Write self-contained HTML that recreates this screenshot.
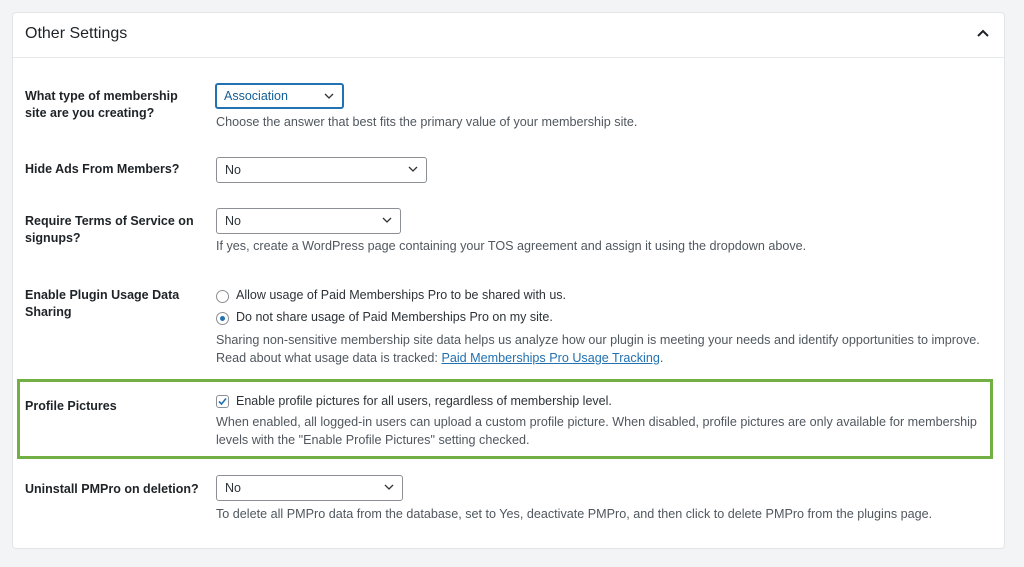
<!DOCTYPE html>
<html><head><style>
body{margin:0;width:1024px;height:567px;background:#f3f4f6;font-family:"Liberation Sans",sans-serif;position:relative;overflow:hidden}
.card{position:absolute;left:12px;top:12px;width:993px;height:537px;background:#fff;border:1px solid #e2e4e7;border-radius:4px;box-sizing:border-box}
.hd{position:absolute;left:0;right:0;top:0;height:44px;border-bottom:1px solid #e6e8ea}
.a{position:absolute;white-space:nowrap}
.t{font-size:16px;color:#1d2327}
.l{font-size:12.5px;font-weight:bold;color:#1d2327;line-height:17px}
.d{font-size:12.6px;color:#50575e;line-height:18px}
.o{font-size:12.5px;color:#2c3338}
.sel{position:absolute;height:26px;border:1px solid #8c8f94;border-radius:3px;box-sizing:border-box;font-size:12.5px;color:#2c3338;padding:5px 8px}
.sel svg{position:absolute;right:8px;top:8px}
.rad{position:absolute;width:13px;height:13px;border:1px solid #8c8f94;border-radius:50%;box-sizing:border-box}
</style></head><body>
<div class="card">
<div class="hd"></div>
</div>
<div class="a t" style="left:25px;top:25px">Other Settings</div>
<svg class="a" style="left:977px;top:29px" width="12" height="9"><path d="M1 7 L6 2 L11 7" stroke="#1d2327" stroke-width="2" fill="none"/></svg>

<div class="a l" style="left:25px;top:88px">What type of membership<br>site are you creating?</div>
<div class="sel" style="left:215px;top:83px;width:129px;border:2px solid #2271b1;color:#135e96;padding:4px 7px">Association<svg width="10" height="7"><path d="M1 1 L5 5 L9 1" stroke="#333" stroke-width="1.3" fill="none"/></svg></div>
<div class="a d" style="left:216px;top:113px">Choose the answer that best fits the primary value of your membership site.</div>

<div class="a l" style="left:25px;top:161px">Hide Ads From Members?</div>
<div class="sel" style="left:216px;top:157px;width:211px">No<svg width="10" height="7"><path d="M1 1 L5 5 L9 1" stroke="#333" stroke-width="1.3" fill="none"/></svg></div>

<div class="a l" style="left:25px;top:213px">Require Terms of Service on<br>signups?</div>
<div class="sel" style="left:216px;top:208px;width:185px">No<svg width="10" height="7"><path d="M1 1 L5 5 L9 1" stroke="#333" stroke-width="1.3" fill="none"/></svg></div>
<div class="a d" style="left:216px;top:237px">If yes, create a WordPress page containing your TOS agreement and assign it using the dropdown above.</div>

<div class="a l" style="left:25px;top:287px">Enable Plugin Usage Data<br>Sharing</div>
<div class="rad" style="left:216px;top:290px"></div>
<div class="a o" style="left:236px;top:288px">Allow usage of Paid Memberships Pro to be shared with us.</div>
<div class="rad" style="left:216px;top:312px"><div style="position:absolute;left:3px;top:3px;width:5px;height:5px;border-radius:50%;background:#2271b1"></div></div>
<div class="a o" style="left:236px;top:310px">Do not share usage of Paid Memberships Pro on my site.</div>
<div class="a d" style="left:216px;top:331px">Sharing non-sensitive membership site data helps us analyze how our plugin is meeting your needs and identify opportunities to improve.<br>Read about what usage data is tracked: <span style="color:#2271b1;text-decoration:underline">Paid Memberships Pro Usage Tracking</span>.</div>

<div class="a" style="left:17px;top:379px;width:976px;height:80px;border:3px solid #72b043;box-sizing:border-box"></div>
<div class="a l" style="left:25px;top:398px">Profile Pictures</div>
<div class="a" style="left:216px;top:395px;width:13px;height:13px;border:1px solid #8c8f94;border-radius:3px;box-sizing:border-box"><svg width="11" height="11" style="position:absolute;left:0;top:0"><path d="M2 5.5 L4.5 8 L9 2.5" stroke="#2271b1" stroke-width="1.6" fill="none"/></svg></div>
<div class="a o" style="left:236px;top:394px">Enable profile pictures for all users, regardless of membership level.</div>
<div class="a d" style="left:216px;top:413px">When enabled, all logged-in users can upload a custom profile picture. When disabled, profile pictures are only available for membership<br>levels with the "Enable Profile Pictures" setting checked.</div>

<div class="a l" style="left:25px;top:481px">Uninstall PMPro on deletion?</div>
<div class="sel" style="left:216px;top:475px;width:187px">No<svg width="10" height="7"><path d="M1 1 L5 5 L9 1" stroke="#333" stroke-width="1.3" fill="none"/></svg></div>
<div class="a d" style="left:216px;top:505px">To delete all PMPro data from the database, set to Yes, deactivate PMPro, and then click to delete PMPro from the plugins page.</div>
</body></html>
